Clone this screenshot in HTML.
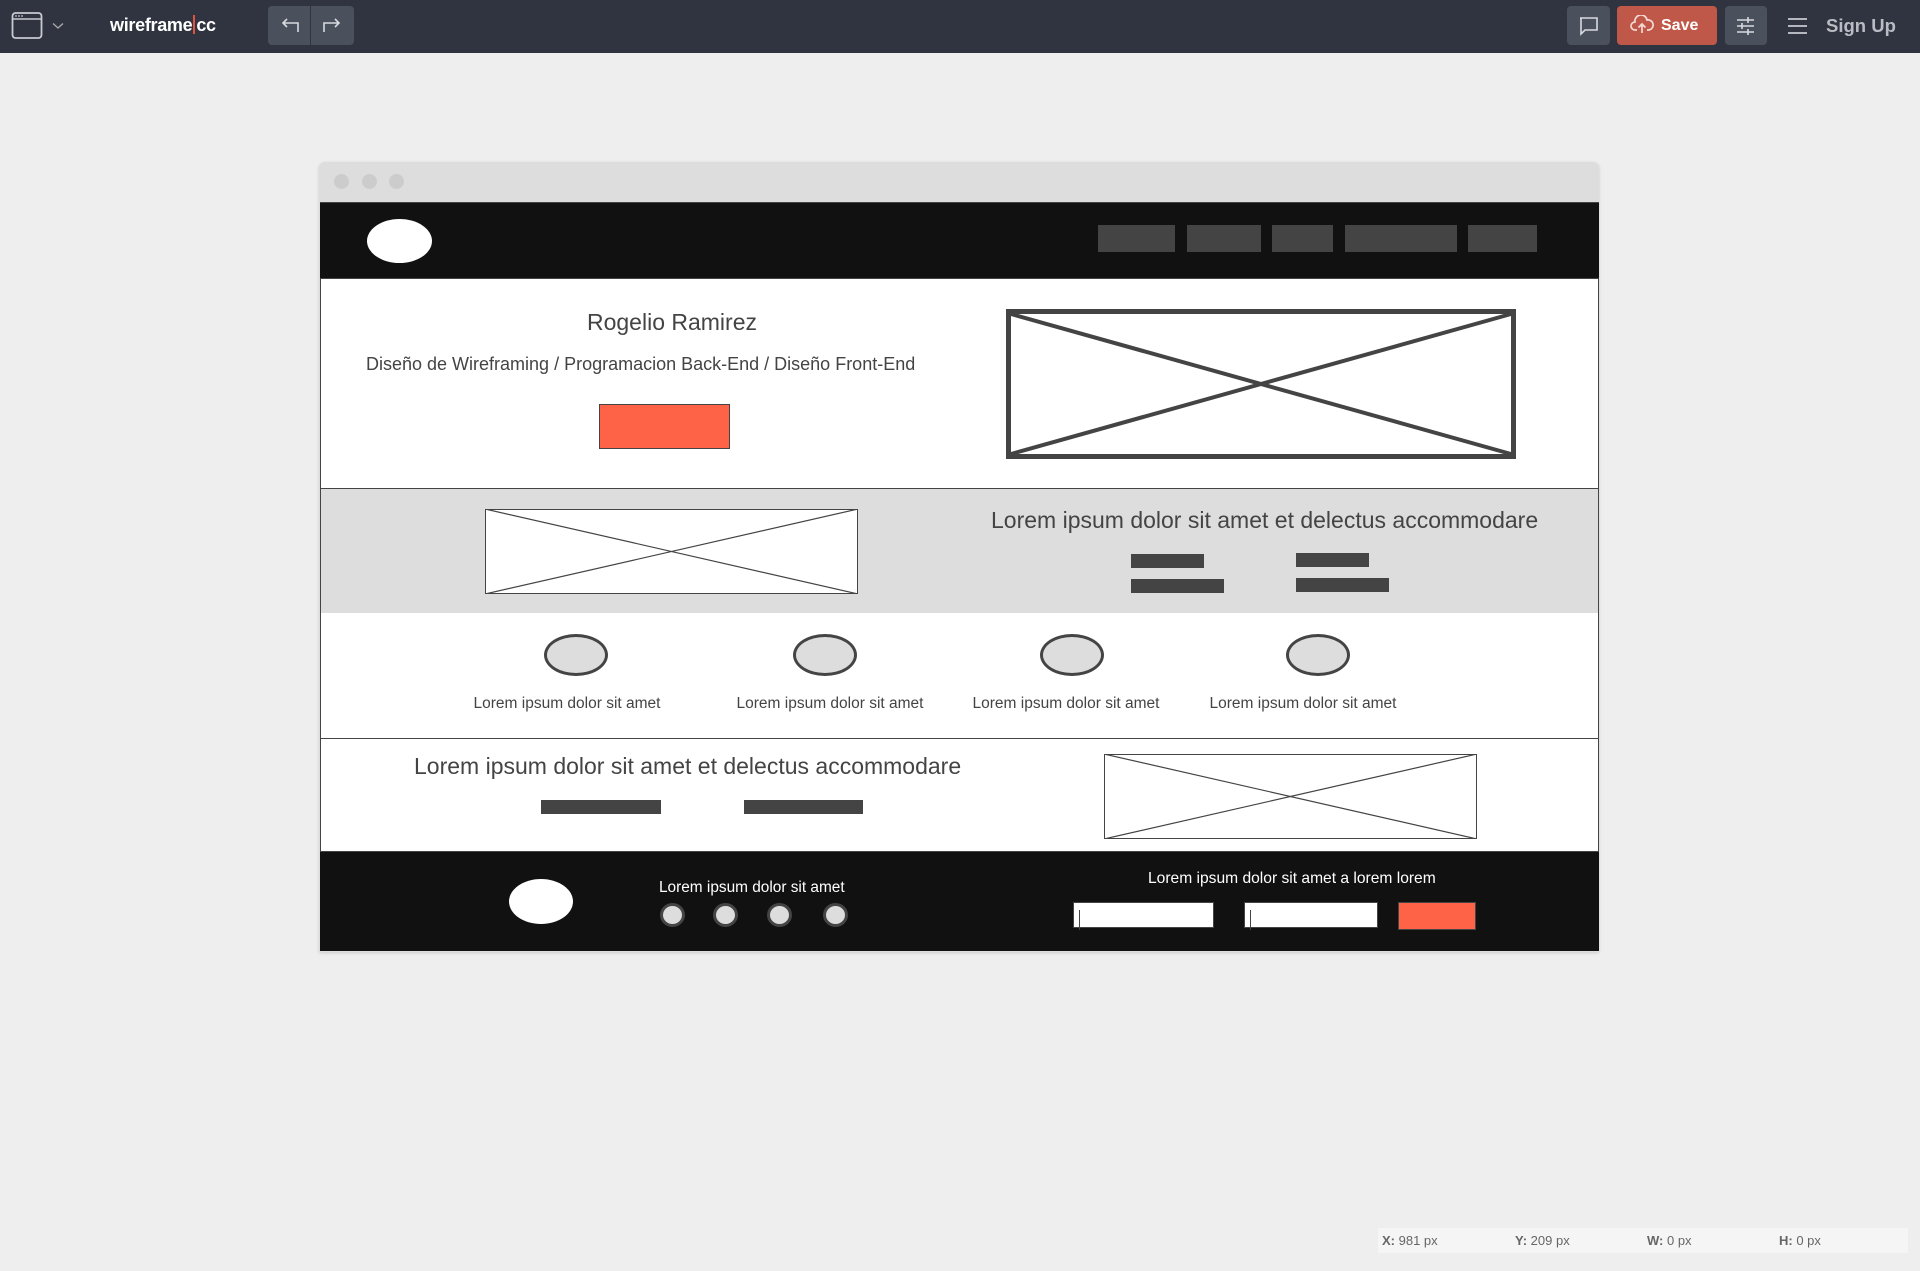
<!DOCTYPE html>
<html><head><meta charset="utf-8"><style>
*{margin:0;padding:0;box-sizing:border-box}
body{width:1920px;height:1271px;background:#eeeeee;position:relative;overflow:hidden;font-family:"Liberation Sans",sans-serif}
.a{position:absolute}
.top{left:0;top:0;width:1920px;height:53px;background:#2f3440}
.btn{background:#4b515c;border-radius:4px}
.t{color:#444;white-space:nowrap}
.bar{background:#444}
.ell{border-radius:50%}
</style></head><body>
<div class="a top"></div>
<svg class="a" style="left:10px;top:10px" width="36" height="32" viewBox="0 0 36 32"><rect x="2.5" y="3" width="29" height="25" rx="3" fill="none" stroke="#c8cad0" stroke-width="1.8"/><line x1="2.5" y1="9" x2="31.5" y2="9" stroke="#c8cad0" stroke-width="1.5"/><circle cx="6" cy="6" r=".9" fill="#c8cad0"/><circle cx="9" cy="6" r=".9" fill="#c8cad0"/><circle cx="12" cy="6" r=".9" fill="#c8cad0"/></svg>
<svg class="a" style="left:52px;top:22px" width="12" height="8"><path d="M1 1.5 L6 6 L11 1.5" fill="none" stroke="#aaa" stroke-width="1.3"/></svg>
<div class="a" style="left:110px;top:15px;color:#fff;font-weight:bold;font-size:18px;letter-spacing:-0.3px">wireframe<span style="display:inline-block;width:2px;height:19px;background:#e0533f;vertical-align:-3px;margin:0 1px"></span>cc</div>
<div class="a btn" style="left:268px;top:6px;width:86px;height:39px"></div>
<div class="a" style="left:310px;top:6px;width:1px;height:39px;background:#2f3440"></div>
<svg class="a" style="left:278px;top:14px" width="24" height="22"><path d="M20 18 V9 H5 M9 5 L5 9 L9 13" fill="none" stroke="#d8dadf" stroke-width="1.6"/></svg>
<svg class="a" style="left:320px;top:14px" width="24" height="22"><path d="M4 18 V9 H19 M15 5 L19 9 L15 13" fill="none" stroke="#d8dadf" stroke-width="1.6"/></svg>
<div class="a btn" style="left:1567px;top:6px;width:43px;height:39px"></div>
<svg class="a" style="left:1578px;top:16px" width="22" height="20"><path d="M2 2 H19 V14 H7 L3 18 V2 Z" fill="none" stroke="#d8dadf" stroke-width="1.6"/></svg>
<div class="a" style="left:1617px;top:6px;width:100px;height:39px;background:#c0584a;border-radius:4px"></div>
<svg class="a" style="left:1630px;top:15px" width="24" height="20"><path d="M7 15 H5 A4 4 0 0 1 5 7 A6 6 0 0 1 17 5 A4.5 4.5 0 0 1 19 15 H17 M12 18 V9 M8.5 12.5 L12 9 L15.5 12.5" fill="none" stroke="#f3d8d4" stroke-width="1.7"/></svg>
<div class="a" style="left:1661px;top:17px;color:#fff;font-weight:bold;font-size:16px">Save</div>
<div class="a btn" style="left:1725px;top:6px;width:42px;height:39px"></div>
<svg class="a" style="left:1735px;top:15px" width="22" height="22"><path d="M2 5 H19 M2 11 H19 M2 17 H19 M13 2 V8 M7 8 V14 M13 14 V20" stroke="#d8dadf" stroke-width="1.6" fill="none"/></svg>
<svg class="a" style="left:1787px;top:16px" width="22" height="20"><path d="M1 3 H20 M1 10 H20 M1 17 H20" stroke="#c8cad0" stroke-width="1.8"/></svg>
<div class="a" style="left:1826px;top:15px;color:#b9bcc2;font-weight:bold;font-size:18.5px">Sign Up</div>

<div class="a" style="left:319px;top:162px;width:1280px;height:790px;background:#ddd;border-radius:6px 6px 0 0;box-shadow:0 1px 3px rgba(0,0,0,.15)"></div>
<div class="a ell" style="left:334px;top:174px;width:15px;height:15px;background:#ccc"></div>
<div class="a ell" style="left:362px;top:174px;width:15px;height:15px;background:#ccc"></div>
<div class="a ell" style="left:389px;top:174px;width:15px;height:15px;background:#ccc"></div>
<div class="a" style="left:320px;top:202px;width:1279px;height:77px;background:#111;border-top:1px solid #444;border-bottom:1px solid #444"></div>
<div class="a ell" style="left:367px;top:219px;width:65px;height:44px;background:#fff"></div>
<div class="a bar" style="left:1098px;top:225px;width:77px;height:27px"></div>
<div class="a bar" style="left:1187px;top:225px;width:74px;height:27px"></div>
<div class="a bar" style="left:1272px;top:225px;width:61px;height:27px"></div>
<div class="a bar" style="left:1345px;top:225px;width:112px;height:27px"></div>
<div class="a bar" style="left:1468px;top:225px;width:69px;height:27px"></div>
<div class="a" style="left:320px;top:279px;width:1279px;height:210px;background:#fff;border-left:1px solid #444;border-right:1px solid #444"></div>
<div class="a t" style="left:472px;top:309px;width:400px;text-align:center;font-size:23px">Rogelio Ramirez</div>
<div class="a t" style="left:366px;top:354px;font-size:18px">Diseño de Wireframing / Programacion Back-End / Diseño Front-End</div>
<div class="a" style="left:599px;top:404px;width:131px;height:45px;background:#ff6347;border:1px solid #444"></div>
<svg class="a" style="left:1006px;top:309px" width="510" height="150"><rect x="2.5" y="2.5" width="505" height="145" fill="#fff" stroke="#444" stroke-width="5"/><path d="M5 5 L505 145 M505 5 L5 145" stroke="#444" stroke-width="4"/></svg>
<div class="a" style="left:320px;top:488px;width:1279px;height:126px;background:#ddd;border:1px solid #444"></div>
<svg class="a" style="left:485px;top:509px" width="373" height="85"><rect x=".5" y=".5" width="372" height="84" fill="#fff" stroke="#444"/><path d="M0 0 L373 85 M373 0 L0 85" stroke="#444" stroke-width="1.2"/></svg>
<div class="a t" style="left:991px;top:507px;font-size:23px">Lorem ipsum dolor sit amet et delectus accommodare</div>
<div class="a bar" style="left:1131px;top:554px;width:73px;height:14px"></div>
<div class="a bar" style="left:1131px;top:579px;width:93px;height:14px"></div>
<div class="a bar" style="left:1296px;top:553px;width:73px;height:14px"></div>
<div class="a bar" style="left:1296px;top:578px;width:93px;height:14px"></div>
<div class="a" style="left:320px;top:613px;width:1279px;height:126px;background:#fff;border-left:1px solid #444;border-right:1px solid #444;border-bottom:1px solid #444"></div>
<div class="a ell" style="left:544px;top:634px;width:64px;height:42px;background:#ddd;border:3px solid #444"></div>
<div class="a ell" style="left:793px;top:634px;width:64px;height:42px;background:#ddd;border:3px solid #444"></div>
<div class="a ell" style="left:1040px;top:634px;width:64px;height:42px;background:#ddd;border:3px solid #444"></div>
<div class="a ell" style="left:1286px;top:634px;width:64px;height:42px;background:#ddd;border:3px solid #444"></div>
<div class="a t" style="left:467px;top:695px;width:200px;text-align:center;font-size:15.5px">Lorem ipsum dolor sit amet</div>
<div class="a t" style="left:730px;top:695px;width:200px;text-align:center;font-size:15.5px">Lorem ipsum dolor sit amet</div>
<div class="a t" style="left:966px;top:695px;width:200px;text-align:center;font-size:15.5px">Lorem ipsum dolor sit amet</div>
<div class="a t" style="left:1203px;top:695px;width:200px;text-align:center;font-size:15.5px">Lorem ipsum dolor sit amet</div>
<div class="a" style="left:320px;top:739px;width:1279px;height:113px;background:#fff;border-left:1px solid #444;border-right:1px solid #444"></div>
<div class="a t" style="left:414px;top:753px;font-size:23px">Lorem ipsum dolor sit amet et delectus accommodare</div>
<div class="a bar" style="left:541px;top:800px;width:120px;height:14px"></div>
<div class="a bar" style="left:744px;top:800px;width:119px;height:14px"></div>
<svg class="a" style="left:1104px;top:754px" width="373" height="85"><rect x=".5" y=".5" width="372" height="84" fill="#fff" stroke="#444"/><path d="M0 0 L373 85 M373 0 L0 85" stroke="#444" stroke-width="1.2"/></svg>
<div class="a" style="left:320px;top:851px;width:1279px;height:100px;background:#111;border-top:1px solid #444"></div>
<div class="a ell" style="left:509px;top:879px;width:64px;height:45px;background:#fff"></div>
<div class="a" style="left:659px;top:879px;color:#fff;font-size:15.4px;white-space:nowrap">Lorem ipsum dolor sit amet</div>
<div class="a ell" style="left:660px;top:903px;width:25px;height:24px;background:#ddd;border:3px solid #444"></div>
<div class="a ell" style="left:713px;top:903px;width:25px;height:24px;background:#ddd;border:3px solid #444"></div>
<div class="a ell" style="left:767px;top:903px;width:25px;height:24px;background:#ddd;border:3px solid #444"></div>
<div class="a ell" style="left:823px;top:903px;width:25px;height:24px;background:#ddd;border:3px solid #444"></div>
<div class="a" style="left:1148px;top:870px;color:#fff;font-size:15.6px;white-space:nowrap">Lorem ipsum dolor sit amet a lorem lorem</div>
<div class="a" style="left:1073px;top:902px;width:141px;height:26px;background:#fff;border:1px solid #444"></div>
<div class="a" style="left:1079px;top:910px;width:1px;height:20px;background:#444"></div>
<div class="a" style="left:1244px;top:902px;width:134px;height:26px;background:#fff;border:1px solid #444"></div>
<div class="a" style="left:1250px;top:910px;width:1px;height:20px;background:#444"></div>
<div class="a" style="left:1398px;top:902px;width:78px;height:28px;background:#ff6347;border:1px solid #444"></div>

<div class="a" style="left:1378px;top:1228px;width:530px;height:25px;background:#f5f5f5"></div>
<div class="a" style="left:1382px;top:1233px;font-size:13px;color:#666"><b>X:</b> 981 px</div>
<div class="a" style="left:1515px;top:1233px;font-size:13px;color:#666"><b>Y:</b> 209 px</div>
<div class="a" style="left:1647px;top:1233px;font-size:13px;color:#666"><b>W:</b> 0 px</div>
<div class="a" style="left:1779px;top:1233px;font-size:13px;color:#666"><b>H:</b> 0 px</div>
</body></html>
